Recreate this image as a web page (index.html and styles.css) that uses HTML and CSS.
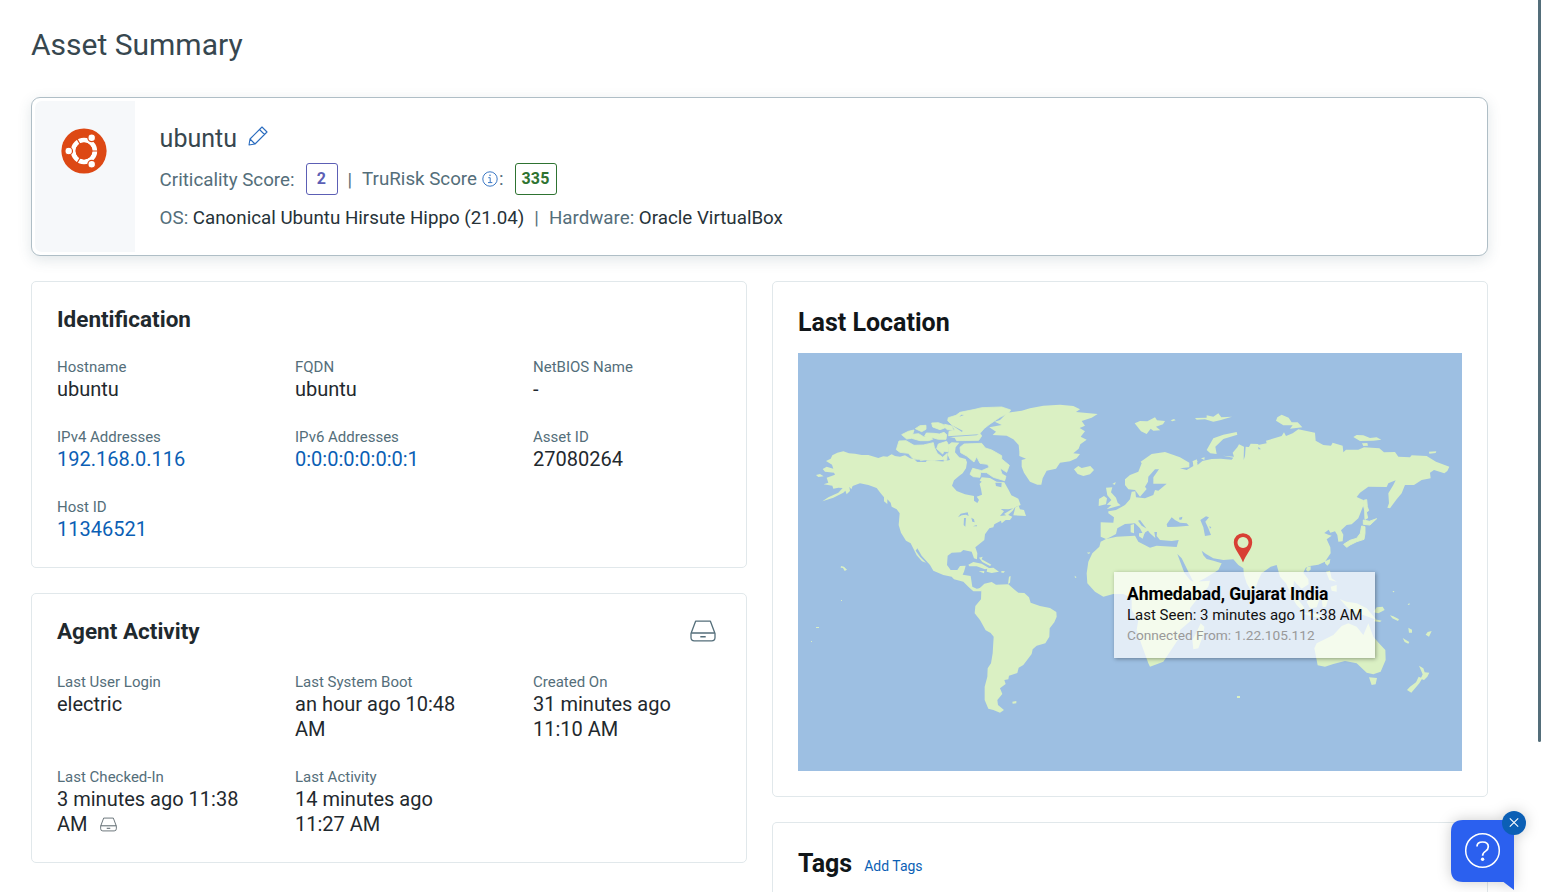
FILE: index.html
```html
<!DOCTYPE html>
<html lang="en">
<head>
<meta charset="utf-8">
<title>Asset Summary</title>
<link rel="stylesheet" href="styles.css">
</head>
<body>
<svg width="0" height="0" class="defs"><defs>
<symbol id="drive" viewBox="0 0 26 22"><path d="M5.6 1.2H20.4L25 13.5V17.5Q25 20.8 21.7 20.8H4.3Q1 20.8 1 17.5V13.5Z" fill="none" stroke="currentColor" stroke-width="1.3" stroke-linejoin="round"/><path d="M1.2 13H24.8M10.3 16.8H15.7" fill="none" stroke="currentColor" stroke-width="1.5"/></symbol>
</defs></svg>
<main class="page">
<h1 class="title">Asset Summary</h1>
<section class="hero">
  <div class="hero-side">
    <svg class="logo" viewBox="0 0 46 46"><circle cx="23" cy="23" r="22.6" fill="#dd4814"/><circle cx="23" cy="23" r="10.8" fill="none" stroke="#fff" stroke-width="4.8"/><g stroke="#dd4814" stroke-width="1.1"><path d="M23 23H37M23 23L16 10.9M23 23L16 35.1"/><g fill="#fff" stroke-width="1.2"><circle cx="7.7" cy="23" r="3.8"/><circle cx="30.7" cy="9.8" r="3.8"/><circle cx="30.7" cy="36.2" r="3.8"/></g></g><circle cx="23" cy="23" r="8.4" fill="#dd4814"/></svg>
  </div>
  <div class="hero-body">
    <div class="name"><span>ubuntu</span><svg class="pencil" viewBox="0 0 20 20"><path d="M1 19L2 13L14 1L19 6L7 18ZM2 13L7 18M11.5 3.5L16.5 8.5" fill="none" stroke="#2a6cbf" stroke-width="1.1" stroke-linejoin="round"/></svg></div>
    <div class="scores"><span class="crit">Criticality Score:</span><b class="score violet">2</b><span class="bar">|</span><span class="tru">TruRisk Score</span><svg class="info" viewBox="0 0 16 16"><circle cx="8" cy="8" r="7.2" fill="none" stroke="#3b78c4"/><path d="M6.3 6.7H8.2V11.6M6 11.6H10.3" fill="none" stroke="#3b78c4"/><circle cx="8" cy="4.3" r=".8" fill="#3b78c4"/></svg><span class="tru">:</span><b class="score green">335</b></div>
    <div class="os"><span>OS: </span><em>Canonical Ubuntu Hirsute Hippo (21.04)</em><span class="bar2">|</span><span>Hardware: </span><em>Oracle VirtualBox</em></div>
  </div>
</section>
<div class="cols">
  <div class="col">
    <section class="card ident">
      <h2>Identification</h2>
      <div class="fields">
        <div><label>Hostname</label><p>ubuntu</p></div>
        <div><label>FQDN</label><p>ubuntu</p></div>
        <div><label>NetBIOS Name</label><p>-</p></div>
        <div><label>IPv4 Addresses</label><p class="link">192.168.0.116</p></div>
        <div><label>IPv6 Addresses</label><p class="link">0:0:0:0:0:0:0:1</p></div>
        <div><label>Asset ID</label><p>27080264</p></div>
        <div><label>Host ID</label><p class="link">11346521</p></div>
      </div>
    </section>
    <section class="card agent">
      <div class="head"><h2>Agent Activity</h2><svg class="drive"><use href="#drive"/></svg></div>
      <div class="fields">
        <div><label>Last User Login</label><p>electric</p></div>
        <div><label>Last System Boot</label><p>an hour ago 10:48<br>AM</p></div>
        <div><label>Created On</label><p>31 minutes ago<br>11:10 AM</p></div>
        <div><label>Last Checked-In</label><p>3 minutes ago 11:38<br>AM <svg class="drive-sm"><use href="#drive"/></svg></p></div>
        <div><label>Last Activity</label><p>14 minutes ago<br>11:27 AM</p></div>
      </div>
    </section>
  </div>
  <div class="col">
    <section class="card location">
      <h2 class="big">Last Location</h2>
      <div class="map">
      <svg class="world" viewBox="798 353 664 418">
        <rect x="798" y="353" width="664" height="418" fill="#9dbfe2"/>
        <!-- North America -->
        <g transform="translate(800 390) scale(.33333)" fill="#daf0c3">
          <path d="M78 213L92 206 97 196 112 188 130 184 147 190 165 191 185 195 205 195 235 204 250 199 262 200 275 193 285 198 300 200 315 196 330 205 350 209 375 212 400 213 430 214 450 210 443 195 447 180 444 165 455 157 478 158 467 172 465 187 478 202 497 207 501 217 498 235 488 250 478 257 462 271 456 287 470 303 495 313 522 318 522 332 532 339 537 330 530 320 546 314 543 297 537 275 545 262 570 264 590 275 613 277 626 300 634 316 655 326 662 345 645 352 638 362 622 377 612 372 640 355 625 358 602 357 612 364 600 378 625 375 637 380 630 390 617 390 605 400 603 392 583 403 580 412 568 415 555 433 553 450 526 472 532 490 531 508 522 505 515 485 490 480 482 487 455 488 443 497 441 525 452 540 472 540 480 528 497 527 492 545 488 554 512 558 517 590 530 596 543 594 546 604 520 604 505 590 490 575 462 568 455 560 430 555 400 542 390 525 365 497 352 475 347 482 360 500 378 518 366 514 350 496 332 460 318 452 303 428 296 405 299 370 290 358 275 350 272 338 262 328 262 342 252 334 252 322 242 310 230 294 205 285 180 280 158 288 154 298 148 290 150 303 140 313 136 302 130 308 100 323 67 334 85 322 115 308 128 294 115 293 100 296 97 287 71 283 85 278 80 263 105 254 102 248 75 245 68 237 80 230 100 236 96 224Z"/>
          <path stroke="#daf0c3" stroke-width="2.5" stroke-linejoin="round" d="M297 153L318 152 342 166 370 165 400 158 403 172 412 190 428 202 442 190 440 211 400 212 360 209 338 205 325 190 300 187 289 179ZM305 134L325 124 342 120 338 133 356 131 372 141 390 137 398 148 385 152 360 152 335 145 320 147ZM346 116L360 107 378 106 378 118 365 125ZM395 99L415 98 431 104 434 114 420 119 398 111ZM402 130L418 132 432 127 440 134 438 148 415 148 398 143 374 138 379 129ZM443 92L445 83 468 76 480 67 525 58 545 53 605 51 632 60 625 70 600 82 570 102 553 115 540 130 545 138 536 151 470 152 465 143 446 139 447 124 465 120 455 104ZM415 162L440 154 447 168 445 185 432 184 428 192 410 176ZM480 172L492 162 545 160 556 174 575 180 605 197 605 207 628 226 620 247 600 234 606 252 618 259 614 272 580 262 560 248 542 247 540 262 520 260 510 253 518 235 545 242 568 232 562 223 540 220 530 200 522 216 500 198 482 188ZM434 103L455 108 460 120 442 119 433 111Z"/>
          <path d="M48 255L60 252 71 259 55 261ZM646 352L656 347 660 358 672 360 678 378 640 376ZM505 524L520 516 545 521 568 535 555 538 530 529 508 529ZM562 535L580 533 597 545 575 549 560 545ZM536 544L553 543 552 550ZM605 543L615 544 610 549 603 547ZM537 503L548 500 545 508 574 524 570 528 547 516ZM627 560L632 558 630 578 624 582ZM123 528L132 530 141 539 134 543 129 534 122 533Z"/>
          <g fill="#9dbfe2"><path d="M474 382L482 371 503 367 506 378 498 374 485 376ZM492 384L498 384 496 410 491 405ZM514 383L522 388 524 397 517 395ZM519 409L530 405 531 409ZM586 278L605 278 604 292 588 288ZM442 139L536 133 530 136 442 142ZM455 105L488 122 486 126ZM478 80L492 75 484 74ZM345 211L358 209 362 214 380 211 378 216 352 216ZM404 212L432 209 430 214Z"/><path d="M536 270L545 275 535 285Z"/></g>
        </g>
        <!-- South America -->
        <g transform="translate(940 550) scale(.33333)" fill="#daf0c3">
          <path d="M97 118L112 120 123 111 133 101 155 96 168 104 205 103 222 118 235 128 253 129 267 142 272 158 300 168 330 174 349 186 350 200 343 217 329 235 328 260 316 280 290 287 278 298 275 312 250 345 236 353 232 369 207 377 205 388 193 390 197 402 180 415 187 432 172 450 174 465 192 480 180 488 160 480 145 476 134 450 134 410 142 380 143 355 153 340 158 310 161 260 152 249 137 241 120 210 104 190 106 168 123 148 124 120ZM217 455L229 453 229 460 218 461Z"/>
        </g>
        <!-- Greenland, Eurasia and Africa -->
        <g transform="translate(1030 390) scale(.33333)" fill="#daf0c3">
          <path d="M-122 112L-85 105 -106 95 -90 90 -68 68 -25 62 0 55 40 47 90 44 130 48 150 58 138 66 203 72 185 83 155 93 165 107 149 114 165 124 152 140 170 149 151 163 146 176 130 190 150 192 140 205 120 214 90 218 78 236 50 242 38 265 34 284 22 284 0 275 -18 248 -25 230 -25 210 -12 206 -32 198 -32 185 -34 165 -50 148 -70 137 -112 135 -102 125Z"/>
          <path d="M132 238L145 228 155 234 181 228 192 240 180 253 160 258 143 252ZM314 100L330 93 352 94 375 82 381 91 405 93 399 103 378 110 391 121 370 122 362 116 350 132 333 124ZM422 91L432 87 437 91 427 94ZM495 84L530 83 530 76 550 80 565 70 574 82 606 80 570 91 550 95 525 88 500 89ZM530 180L550 145 580 134 620 126 622 134 580 147 556 170 560 192 541 190ZM487 215L500 208 503 216ZM513 205L524 202 523 210ZM228 293L247 292 243 307 258 323 263 338 272 346 230 358 244 345 230 344 244 330 232 316ZM207 327L222 318 231 325 228 343 206 348ZM247 282L257 276 255 284ZM302 405L312 402 312 430 302 427ZM327 430L344 428 338 446 327 439ZM170 488L181 487 177 492ZM134 557L140 562 135 564ZM738 92L742 82 755 74 776 83 785 97 803 97 817 112 780 116 788 106 760 106ZM970 141L980 135 1000 136 1020 144 1040 142 1054 149 1030 152 990 153ZM996 160L1012 159 1014 167 1000 168ZM1197 185L1219 184 1217 189 1198 191ZM885 514L901 507 899 520 892 527 885 520ZM831 532L842 529 842 539 834 545 828 540Z"/>
          <path stroke="#daf0c3" stroke-width="3" stroke-linejoin="round" d="M1001 331L1010 329 1012 350 1016 362 1009 366 1013 384 1005 388 1004 360 1000 345ZM1000 390L1018 394 1040 386 1020 405 1000 403ZM995 408L1005 410 1005 430 1002 448 980 455 960 465 950 472 941 463 960 451 980 445 991 430Z"/>
          <path d="M285 268L300 255 325 245 335 220 332 215 365 192 405 186 450 202 478 218 478 232 450 235 470 240 490 228 488 213 500 210 503 225 517 213 545 207 572 206 605 209 610 203 579 197 612 200 608 188 622 172 627 163 642 170 641 210 645 198 647 170 662 172 650 202 652 180 662 161 685 162 685 178 693 178 680 166 710 160 708 152 755 138 762 127 768 138 788 130 805 118 855 128 857 152 880 165 903 167 908 158 938 167 940 187 948 179 985 179 1002 172 1048 175 1062 187 1095 186 1105 200 1140 202 1145 196 1190 198 1218 215 1258 230 1252 243 1243 250 1212 240 1200 248 1202 265 1175 270 1152 285 1125 285 1115 310 1100 328 1080 355 1072 353 1077 340 1075 310 1090 285 1097 271 1075 280 1070 291 1015 290 990 308 980 321 1000 330 1000 347 985 385 965 403 950 405 933 421 940 434 938 454 925 455 922 435 915 424 901 428 896 419 883 429 895 434 905 437 890 448 901 472 902 490 885 515 865 524 840 528 827 533 820 548 835 568 836 583 815 596 800 582 792 572 790 590 802 610 795 625 780 605 768 580 750 560 740 525 722 530 695 550 685 570 678 590 665 605 650 580 642 555 640 535 625 525 610 508 580 510 550 505 528 492 515 482 520 496 530 507 550 512 575 520 565 540 525 565 495 580 490 575 540 572 535 590 495 635 480 655 485 690 450 720 450 740 420 785 400 815 360 830 355 820 335 765 320 720 325 690 305 660 305 625 280 612 250 612 220 620 195 605 172 580 170 550 175 515 187 490 208 470 212 455 228 447 260 440 315 437 325 455 360 473 380 467 440 471 446 450 425 453 390 450 380 438 381 426 373 426 376 444 360 430 330 390 324 392 335 407 357 420 346 427 340 434 330 415 315 400 285 402 262 415 258 432 240 442 228 447 212 440 212 397 250 398 252 382 235 370 235 364 258 360 285 345 300 328 305 305 316 304 318 322 345 325 370 315 375 300 385 302 410 281 370 281 370 262 387 238 375 238 355 260 354 275 345 290 350 297 330 320 315 300 295 298 285 285ZM512 700L523 710 520 735 505 775 490 778 487 750 497 732Z"/>
          <g fill="#9dbfe2"><path d="M410 403L425 382 435 390 450 398 470 400 477 407 440 410 412 411ZM447 383L457 380 456 388 449 390ZM511 390L528 379 537 382 526 395 535 415 543 435 525 438 520 412ZM442 492L455 505 490 575 480 570 463 548ZM538 408L544 412 540 416Z"/></g>
        </g>
        <!-- Southeast Asia and Oceania -->
        <g transform="translate(1080 520) scale(.33333)" fill="#daf0c3">
          <path d="M625 215L640 220 672 262 670 275 650 255ZM680 245L708 218 722 228 710 262 690 265ZM665 278L705 280 730 290 700 292ZM738 155L750 152 755 175 770 185 748 180ZM752 200L770 195 770 215 755 212ZM725 238L745 235 738 260 728 262ZM780 238L800 245 830 250 860 265 890 300 850 285 820 280 800 260ZM890 262L908 260 914 270 895 280 880 277ZM885 298L905 302 900 306 880 304ZM528 205L537 215 530 222Z"/>
          <path d="M703 385L710 370 760 345 785 318 805 310 830 320 850 345 865 310 880 350 897 370 916 390 917 420 902 455 880 463 860 458 830 430 795 423 760 432 735 440 713 436ZM867 472L891 474 887 493 875 495Z"/>
          <path d="M1017 437L1030 445 1034 457 1048 458 1042 470 1032 480 1022 476 1028 463ZM1016 470L1027 475 1018 490 994 518 981 510 990 500 1008 487ZM930 286L940 289 957 298 954 303 937 295ZM985 323L996 329 996 338 987 338ZM968 354L988 366 985 371 974 366ZM1043 336L1055 333 1047 350 1037 344ZM939 213L943 213 942 217 938 216ZM985 251L989 250 988 255 983 254Z"/>
        </g>
        <path d="M1237 696h3v2h-3zM841 600h1v1h-1zM811 641h1v1h-1zM816 627h3v1h-3z" fill="#daf0c3"/>
        <path d="M1243 562.5C1240 554 1233.8 549.5 1233.8 542.3A9.2 9.2 0 0 1 1252.2 542.3C1252.2 549.5 1246 554 1243 562.5ZM1243 537A5.5 5.5 0 1 0 1243.01 537Z" fill="#d83f34" fill-rule="evenodd"/>
      </svg>
      <div class="tip"><strong>Ahmedabad, Gujarat India</strong><span>Last Seen: 3 minutes ago 11:38 AM</span><small>Connected From: 1.22.105.112</small></div>
      </div>
    </section>
    <section class="card tags"><h2 class="big">Tags</h2><a>Add Tags</a></section>
  </div>
</div>
</main>
<div class="thumb"></div>
<div class="help">
  <svg viewBox="0 0 63 71"><path d="M12 0H63V70L52.5 62H12Q0 62 0 50V12Q0 0 12 0Z" fill="#2b60ef"/><circle cx="31.5" cy="30.5" r="16.8" fill="none" stroke="#fff" stroke-width="1.5"/><path d="M26 26.5Q26 22 31.6 22Q37.3 22 37.3 26.7Q37.3 29.3 34.6 31.1Q31.6 33 31.6 35.7" fill="none" stroke="#fff" stroke-width="1.7"/><circle cx="31.6" cy="39.3" r="1.7" fill="#fff"/></svg>
  <svg class="close" viewBox="0 0 24 24"><circle cx="12" cy="12" r="12" fill="#0b5fb5"/><path d="M7.8 7.3L16.2 15.7M16.2 7.3L7.8 15.7" stroke="#fff" stroke-width="1.1"/></svg>
</div>
</body>
</html>
```
FILE: styles.css
```css
* { box-sizing: border-box; }
body { margin: 0; height: 892px; overflow: hidden; background: #fff; font-family: Roboto, sans-serif; color: #1f292e; }
h1, h2, p { margin: 0; }
.defs { position: absolute; }
.page { padding: 27px 53px 0 31px; }
.title { font-size: 30px; line-height: 36px; font-weight: 400; color: #37474f; }
.hero { display: flex; margin-top: 34px; height: 159px; padding: 3px; border: 1px solid #afbec6; border-radius: 9px; background: #fff; box-shadow: 0 4px 14px rgba(55, 85, 100, .15); }
.hero-side { width: 100px; background: #f6f8fa; border-radius: 7px 0 0 7px; padding: 27px 0 0 26px; }
.logo { display: block; width: 46px; height: 46px; }
.hero-body { padding-left: 24.6px; color: #546e7a; font-size: 18.75px; }
.name { display: flex; align-items: center; height: 30px; margin-top: 22px; font-size: 25px; color: #37474f; }
.pencil { width: 20px; height: 20px; margin: -4px 0 0 11px; }
.scores { display: flex; align-items: center; margin-top: 10px; height: 32px; }
.crit, .bar { position: relative; top: 1px; }
.score { height: 32px; border: 1px solid; border-radius: 3px; text-align: center; font-size: 16px; line-height: 30px; font-weight: 700; letter-spacing: .2px; }
.violet { width: 32px; margin-left: 11px; color: #5c5fb5; }
.green { width: 42px; margin-left: 11px; color: #2e7331; }
.bar { margin: 0 10px; }
.info { width: 16px; height: 16px; margin: -1px 1px 0 5px; }
.os { margin-top: 11px; line-height: 24px; white-space: pre; }
.os em { font-style: normal; color: #263238; }
.bar2 { margin: 0 10px; }
.cols { display: grid; grid-template-columns: 716px 716px; column-gap: 25px; margin-top: 25px; }
.col { display: flex; flex-direction: column; gap: 25px; }
.card { border: 1px solid #e1e8eb; border-radius: 5px; padding: 25px; background: #fff; }
.ident { height: 287px; }
.agent { height: 270px; }
h2 { font-size: 22.5px; line-height: 24px; font-weight: 700; }
.big { font-size: 25px; line-height: 31px; color: #111619; }
.head { display: flex; justify-content: space-between; height: 24px; }
.drive { width: 26px; height: 22px; margin: 1px 5px 0 0; color: #546e7a; }
.drive-sm { width: 17px; height: 15px; margin-left: 7.5px; vertical-align: -1px; color: #546066; }
.fields { display: grid; grid-template-columns: 238px 238px 1fr; row-gap: 20px; margin-top: 26px; }
.agent .fields { margin-top: 29px; row-gap: 25px; }
label { display: block; font-size: 15px; line-height: 20px; color: #546e7a; }
.fields p { font-size: 20px; line-height: 25px; padding-bottom: 5px; white-space: nowrap; }
.agent .fields p { padding-bottom: 0; }
.fields .link { color: #0b5fb5; }
.location { height: 516px; }
.map { position: relative; margin-top: 15px; }
.world { display: block; width: 664px; height: 418px; }
.tip { position: absolute; left: 316px; top: 219px; width: 261px; height: 86px; padding: 11px 13px; background: rgba(255, 255, 255, .7); box-shadow: 1px 1px 4px rgba(0, 0, 0, .35); display: flex; flex-direction: column; color: #111; white-space: nowrap; }
.tip strong { font-size: 17.5px; line-height: 22px; font-weight: 700; letter-spacing: -.08px; color: #000; }
.tip span { font-size: 15px; line-height: 21px; }
.tip small { font-size: 13.7px; line-height: 18px; color: #999; }
.tags { display: flex; height: 70px; border-bottom: 0; border-radius: 5px 5px 0 0; padding-bottom: 0; }
.tags a { margin: 9px 0 0 12px; font-size: 14px; line-height: 19px; color: #0b5fb5; }
.thumb { position: absolute; right: 0; top: 0; width: 3px; height: 742px; background: #546e7a; border-radius: 0 0 2px 2px; }
.help { position: absolute; left: 1451px; top: 820px; width: 63px; height: 71px; filter: drop-shadow(0 0 7px rgba(0, 0, 0, .2)); }
.close { position: absolute; left: 51px; top: -9px; width: 24px; height: 24px; }
```
